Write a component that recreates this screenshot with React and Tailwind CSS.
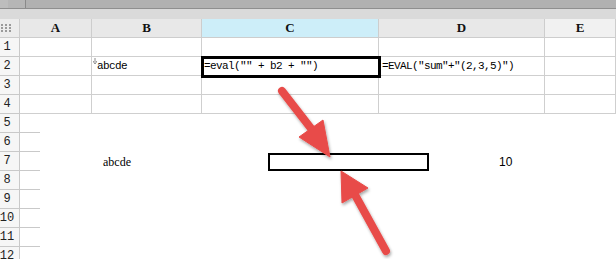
import React from "react";

const mono = "font-['Liberation_Mono','DejaVu_Sans_Mono',monospace]";
const serif = "font-['Liberation_Serif','DejaVu_Serif',serif]";

function Cell({ w, children, className = "" }) {
  return (
    <div
      className={`h-[19px] shrink-0 border-r border-b border-[#cfcfcf] flex items-center overflow-visible whitespace-nowrap ${w} ${className}`}
    >
      {children}
    </div>
  );
}

function RowHead({ n }) {
  return (
    <div className={`w-[20px] h-[19px] shrink-0 border-r border-b border-[#c9c9c9] bg-[#f6f6f6] flex items-center justify-center pr-[5px] text-[12px] text-[#222] ${mono}`}>
      {n}
    </div>
  );
}

function FullRow({ n, b, c, d }) {
  return (
    <div className="flex">
      <RowHead n={n} />
      <Cell w="w-[72px]" />
      <Cell w="w-[110px]" className="pl-[1px]">{b}</Cell>
      <Cell w="w-[177px]" className="pl-[2px]">{c}</Cell>
      <Cell w="w-[166px]" className="pl-[3px]">{d}</Cell>
      <Cell w="flex-1" />
    </div>
  );
}

function ShortRow({ n, children }) {
  return (
    <div className="flex h-[19px] items-center">
      <RowHead n={n} />
      <div className="w-[20px] h-[19px] shrink-0 border-b border-[#c9c9c9]" />
      {children}
    </div>
  );
}

function ColHead({ w, label, bg = "bg-[#e8e8e8]" }) {
  return (
    <div
      className={`h-[19px] shrink-0 border-r border-b border-[#cdcdcd] flex items-center justify-center text-[13px] font-bold text-[#111] ${serif} ${w} ${bg}`}
    >
      {label}
    </div>
  );
}

export default function App() {
  const txt = `${mono} text-[11px] tracking-[-0.6px] text-black leading-none`;
  return (
    <div className="relative w-[616px] h-[259px] overflow-hidden bg-white">
      {/* top bar */}
      <div className="flex h-[9px] border-b border-[#8f8f8f] bg-[#b1b1b1]">
        <div className="w-[8px] bg-[#bdbdbd]" />
        <div className="w-[18px] border-r border-[#8a8a8a] bg-[#b6b6b6]" />
      </div>
      <div className="h-[10px] bg-[#dadada]" />

      {/* header */}
      <div className="flex">
        <div className="w-[20px] h-[19px] shrink-0 border-r border-b border-[#cdcdcd] bg-[#ececec] flex items-center justify-center pr-[7px]">
          <div className="grid grid-cols-3 gap-x-[2px] gap-y-[1px]">
            {Array.from({ length: 9 }).map((_, i) => (
              <div key={i} className="w-[2px] h-[2px] bg-[#9a9a9a]" />
            ))}
          </div>
        </div>
        <ColHead w="w-[72px]" label="A" />
        <ColHead w="w-[110px]" label="B" />
        <ColHead w="w-[177px]" label="C" bg="bg-[#cdeef9]" />
        <ColHead w="w-[166px]" label="D" />
        <ColHead w="flex-1" label="E" bg="bg-[#f1f1f1]" />
      </div>

      <FullRow n="1" />
      <FullRow
        n="2"
        b={
          <div className="flex items-center">
            <svg width="4" height="6" viewBox="0 0 4 6" className="self-start -mt-[3px]">
              <path d="M2 0 V4 M0 3 L2 6 L4 3" stroke="#8a8a8a" strokeWidth="1" fill="none" />
            </svg>
            <span className={txt}>abcde</span>
          </div>
        }
        c={<span className={txt}>=eval("" + b2 + "")</span>}
        d={<span className={txt}>=EVAL("sum"+"(2,3,5)")</span>}
      />
      <FullRow n="3" />
      <FullRow n="4" />
      <ShortRow n="5" />
      <ShortRow n="6" />
      <ShortRow n="7">
        <div className="w-[63px] shrink-0" />
        <div className={`w-[165px] shrink-0 ${serif} text-[12px] text-black`}>abcde</div>
        <div className="w-[161px] h-[18px] shrink-0 border-2 border-black self-start mt-[1px]" />
        <div className="w-[70px] shrink-0" />
        <div className="font-['Liberation_Sans',sans-serif] text-[12px] text-black">10</div>
      </ShortRow>
      <ShortRow n="8" />
      <ShortRow n="9" />
      <ShortRow n="10" />
      <ShortRow n="11" />
      <ShortRow n="12" />

      {/* selected cell C2 */}
      <div className="absolute left-[201px] top-[56px] w-[180px] h-[22px] border-[3px] border-black pointer-events-none" />

      {/* arrows overlay */}
      <svg className="absolute left-0 top-0 pointer-events-none" width="616" height="259" viewBox="0 0 616 259">
        <defs>
          <filter id="sh" x="-20%" y="-20%" width="140%" height="140%">
            <feDropShadow dx="1" dy="2" stdDeviation="1.6" floodColor="#000" floodOpacity="0.35" />
          </filter>
        </defs>
        <g filter="url(#sh)" fill="#e84c49" stroke="#e84c49">
          <line x1="282" y1="91" x2="313" y2="131" strokeWidth="8" strokeLinecap="round" />
          <polygon points="299,137 323,120 330,157" strokeWidth="1" strokeLinejoin="round" />
          <line x1="354" y1="193" x2="386" y2="251" strokeWidth="8" strokeLinecap="round" />
          <polygon points="341,171 342,203 368,188" strokeWidth="1" strokeLinejoin="round" />
        </g>
      </svg>
    </div>
  );
}
